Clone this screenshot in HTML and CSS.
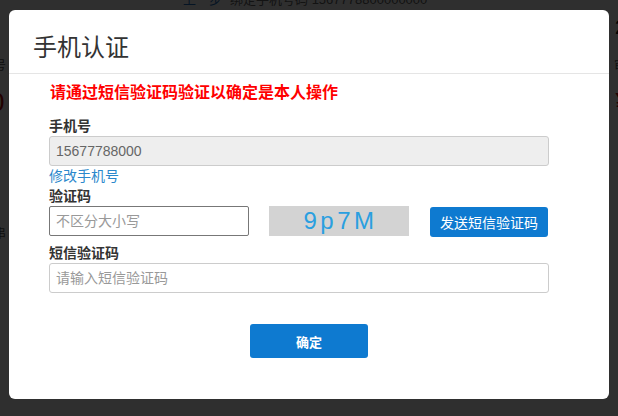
FILE: index.html
```html
<!DOCTYPE html>
<html lang="zh-CN">
<head>
<meta charset="utf-8">
<title>手机认证</title>
<link rel="stylesheet" href="styles.css">
</head>
<body>
<div class="page">
  <div class="bg-top"><span class="bg-link">上一步</span><span class="bg-gray">绑定手机号码 1567778800000000</span></div>
  <div class="bg-row bg-r2"><span></span><span class="bg-big">2</span></div>
  <div class="bg-row bg-r3"><span class="bg-small">号</span><span class="bg-small">审</span></div>
  <div class="bg-row bg-r4"><span class="bg-red">0</span><span class="bg-red">¥</span></div>
  <div class="bg-row bg-r5"><span class="bg-small">串</span><span></span></div>
</div>
<div class="overlay"></div>
<div class="modal">
  <div class="modal-header"><h2 class="modal-title">手机认证</h2></div>
  <div class="modal-body">
    <div class="notice">请通过短信验证码验证以确定是本人操作</div>
    <div class="label label-first">手机号</div>
    <div class="input input-disabled">15677788000</div>
    <a class="link">修改手机号</a>
    <div class="label">验证码</div>
    <div class="captcha-row">
      <input class="input input-captcha" placeholder="不区分大小写">
      <div class="captcha-img">9p7M</div>
      <button class="btn btn-send">发送短信验证码</button>
    </div>
    <div class="label label-sms">短信验证码</div>
    <input class="input input-sms" placeholder="请输入短信验证码">
    <div class="footer"><button class="btn btn-ok">确定</button></div>
  </div>
</div>
</body>
</html>
```
FILE: styles.css
```css
html, body {
  margin: 0;
  padding: 0;
  background: #fff;
  font-family: "Liberation Sans", "Noto Sans CJK SC", sans-serif;
  overflow: hidden;
}

.page {
  width: 640px;
  margin-left: -10px;
  margin-top: -7px;
}
.bg-top {
  padding-left: 193px;
  font-size: 13px;
  line-height: 14px;
  white-space: nowrap;
}
.bg-link { color: #1c6fc0; margin-right: 8px; }
.bg-gray { color: #666; }
.bg-row {
  display: flex;
  justify-content: space-between;
}
.bg-r2 { margin-top: 10px; }
.bg-big { font-size: 20px; line-height: 20px; color: #000; padding-right: 4px; }
.bg-r3 { margin-top: 22px; }
.bg-small { font-size: 12px; line-height: 14px; color: #555; padding: 0 4px; }
.bg-r4 { margin-top: 14px; }
.bg-red { font-size: 26px; line-height: 30px; color: #b00000; }
.bg-r5 { margin-top: 110px; }

.overlay {
  position: fixed;
  inset: 0;
  background: rgba(0, 0, 0, 0.815);
}

.modal {
  position: fixed;
  left: 9px;
  top: 10px;
  width: 600px;
  height: 389px;
  background: #fff;
  border-radius: 6px;
  box-sizing: border-box;
  font-family: "Liberation Sans", "Noto Sans CJK SC", sans-serif;
}
.modal-header {
  padding: 24px 24px 11px;
  border-bottom: 1px solid #e5e5e5;
}
.modal-title {
  margin: 0;
  font-size: 24px;
  line-height: 28px;
  font-weight: normal;
  color: #333;
}
.modal-body {
  padding: 0 40px;
}
.notice {
  margin-top: 9px;
  font-size: 16px;
  line-height: 20px;
  font-weight: bold;
  color: #f00;
  padding-left: 1px;
}
.label {
  font-size: 14px;
  line-height: 20px;
  font-weight: bold;
  color: #333;
}
.label-first { margin-top: 13px; }
.label-sms { margin-top: 6px; }
.input {
  display: block;
  box-sizing: border-box;
  width: 500px;
  height: 30px;
  margin: 0;
  padding: 0 6px;
  border: 1px solid #ccc;
  border-radius: 3px;
  font-family: "Liberation Sans", "Noto Sans CJK SC", sans-serif;
  font-size: 14px;
  line-height: 28px;
  color: #555;
  background: #fff;
  outline: none;
}
.input::placeholder { color: #999; }
.input-disabled {
  background: #eee;
  color: #666;
}
.link {
  display: block;
  font-size: 14px;
  line-height: 20px;
  color: #2a88cc;
  cursor: pointer;
}
.captcha-row {
  display: flex;
  align-items: flex-start;
}
.input-captcha {
  width: 200px;
  border-color: #777;
  border-radius: 2px;
}
.captcha-img {
  margin-left: 20px;
  width: 140px;
  height: 30px;
  background: #d3d3d3;
  color: #2a9fe0;
  font-family: "Liberation Sans", sans-serif;
  font-size: 24px;
  line-height: 30px;
  letter-spacing: 3.5px;
  text-align: center;
  text-indent: 3px;
}
.btn {
  border: none;
  border-radius: 3px;
  background: #0e7ad0;
  color: #fff;
  font-family: "Liberation Sans", "Noto Sans CJK SC", sans-serif;
  font-size: 14px;
  padding: 0;
  cursor: pointer;
}
.btn-send {
  margin-left: 21px;
  margin-top: 1px;
  width: 118px;
  height: 30px;
}
.footer {
  margin-top: 31px;
  display: flex;
  justify-content: center;
}
.btn-ok {
  width: 118px;
  height: 34px;
  font-weight: bold;
  font-size: 13px;
}
```
